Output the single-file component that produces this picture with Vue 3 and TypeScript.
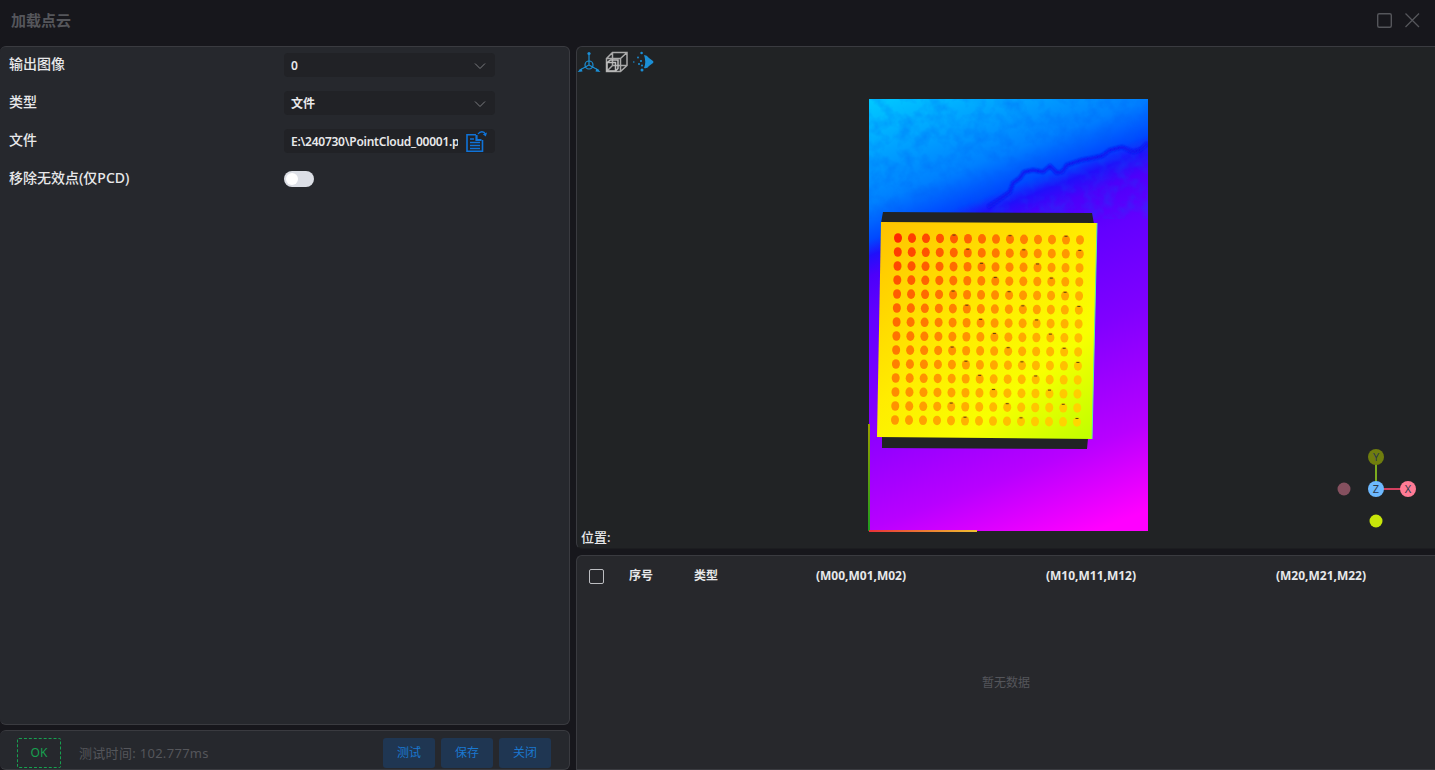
<script setup lang="ts">
interface Dot {
  key: string;
  x: number;
  y: number;
  fill: string;
  speck: boolean;
}

const columns = ['(M00,M01,M02)', '(M10,M11,M12)', '(M20,M21,M22)'];

// Hole grid on the plate, slightly skewed like the captured part.
const dots: Dot[] = [];
for (let row = 0; row < 14; row++) {
  for (let col = 0; col < 14; col++) {
    const t = (col + row) / 26;
    const g = Math.round(40 + 175 * Math.pow(t, 0.65));
    dots.push({
      key: `${row}-${col}`,
      x: 898 + col * 14 - (row * 3) / 13,
      y: 238 + col * 0.15 + row * 14,
      fill: `rgb(255, ${g}, 0)`,
      speck: col > 3 && (row * 7 + col * 5) % 4 === 0,
    });
  }
}

const contour =
  'M1148 143 L1140 150 L1133 152 L1122 147 L1110 150 L1102 156 L1093 158 L1082 160 L1067 165 L1062 172 L1057 173 L1050 166 L1043 172 L1033 170 L1024 172 L1020 178 L1013 183 L1010 192 L1003 197 L997 201 L988 207';
</script>

<template>
  <div class="page">
    <header class="title-bar">
      <span class="title">加载点云</span>
      <div class="win-actions">
        <svg width="16" height="16" viewBox="0 0 16 16" fill="none" stroke="#55565b" stroke-width="1.4">
          <rect x="1.7" y="1.7" width="13.6" height="13.6" rx="1.5" />
        </svg>
        <svg width="16" height="16" viewBox="0 0 16 16" fill="none" stroke="#55565b" stroke-width="1.3">
          <path d="M1.5 1.5L15 15M15 1.5L1.5 15" />
        </svg>
      </div>
    </header>

    <main class="content">
      <section class="left">
        <div class="panel form">
          <div class="row">
            <label>输出图像</label>
            <div class="field">
              <span>0</span>
              <svg class="chevron" viewBox="0 0 12 12" fill="none" stroke="#7b7c80" stroke-width="1">
                <path d="M1 3.5L6 8.5L11 3.5" />
              </svg>
            </div>
          </div>
          <div class="row">
            <label>类型</label>
            <div class="field">
              <span>文件</span>
              <svg class="chevron" viewBox="0 0 12 12" fill="none" stroke="#7b7c80" stroke-width="1">
                <path d="M1 3.5L6 8.5L11 3.5" />
              </svg>
            </div>
          </div>
          <div class="row">
            <label>文件</label>
            <div class="field file">
              <span class="path">E:\240730\PointCloud_00001.pcd</span>
              <svg class="file-icon" viewBox="0 0 22 22" fill="none" stroke="#1073d8">
                <path stroke-width="1.6" d="M11 4.8H2V21.2H17.5V10" />
                <path stroke-width="1.7" d="M5 9H9M5 12.5H15M5 15.5H15M5 18.5H15" />
                <path stroke-width="2.2" d="M11.5 5V10H16.5" />
                <path stroke-width="1.3" d="M13 4C15 1 19 1 20.5 4" />
                <path d="M22 2.5L20.8 6.5L17.8 4.2Z" fill="#1073d8" stroke="none" />
              </svg>
            </div>
          </div>
          <div class="row">
            <label>移除无效点(仅PCD)</label>
            <div class="switch"><i></i></div>
          </div>
        </div>

        <footer class="panel status">
          <span class="ok">OK</span>
          <span class="time">测试时间: 102.777ms</span>
          <div class="buttons">
            <button type="button">测试</button>
            <button type="button">保存</button>
            <button type="button">关闭</button>
          </div>
        </footer>
      </section>

      <section class="right">
        <div class="viewer">
          <div class="tools">
            <svg class="tool" viewBox="0 0 24 22" fill="none" stroke="#1b8fd6" stroke-width="1.2">
              <path d="M12 2V14L2 19.5M12 14L22 19.5" />
              <circle cx="12" cy="14" r="4" />
              <circle cx="12" cy="2.5" r="1.6" fill="#1b8fd6" stroke="none" />
              <path d="M0.5 21L4.5 17.2L5.5 20.5ZM23.5 21L19.5 17.2L18.5 20.5Z" fill="#1b8fd6" stroke="none" />
            </svg>
            <svg class="tool" viewBox="0 0 24 22" fill="none" stroke="#a9a9a9" stroke-width="1.5">
              <path d="M1.5 7.5L7.5 1.5H22V14.5L15.5 20.5H1.5ZM7.5 1.5V14.5H22M7.5 14.5L1.5 20.5M1.5 7.5H15.5V20.5M15.5 7.5L22 1.5" />
              <path d="M2 11.5L5.5 9H13V17.5L10.5 20H2ZM2 11.5H10.5V20" stroke="#bdbdbd" />
            </svg>
            <svg class="tool" viewBox="0 0 24 22" fill="#1b8fd6">
              <path d="M11 4Q14 4 16 7L20 10Q21 11 20 12L16 15Q14 18 11 17Q13.5 11 11 4Z" />
              <circle cx="8.6" cy="2" r="1.3" />
              <circle cx="5" cy="6.5" r="0.9" />
              <circle cx="8" cy="10" r="1.1" />
              <circle cx="0.8" cy="11" r="0.8" />
              <circle cx="6" cy="13" r="1" />
              <circle cx="9" cy="14.5" r="1" />
              <circle cx="9" cy="19" r="1.5" />
            </svg>
          </div>

          <svg class="cloud" viewBox="0 0 1435 770" width="1435" height="770">
            <defs>
              <linearGradient id="depth" gradientUnits="userSpaceOnUse" x1="900" y1="90" x2="1070" y2="540">
                <stop offset="0" stop-color="#00c8ff" />
                <stop offset="0.1" stop-color="#00a4ff" />
                <stop offset="0.2" stop-color="#0080ff" />
                <stop offset="0.27" stop-color="#0048ff" />
                <stop offset="0.3" stop-color="#2010fa" />
                <stop offset="0.34" stop-color="#4c00fa" />
                <stop offset="0.42" stop-color="#6200ff" />
                <stop offset="0.6" stop-color="#8000ff" />
                <stop offset="0.83" stop-color="#b800ff" />
                <stop offset="1" stop-color="#ff00ff" />
              </linearGradient>
              <linearGradient id="plate" gradientUnits="userSpaceOnUse" x1="890" y1="215" x2="1085" y2="445">
                <stop offset="0" stop-color="#ffc200" />
                <stop offset="0.45" stop-color="#ffec00" />
                <stop offset="0.72" stop-color="#f8ff00" />
                <stop offset="1" stop-color="#beff00" />
              </linearGradient>
              <linearGradient id="axis-y" x1="0" y1="0" x2="0" y2="1">
                <stop offset="0" stop-color="#9aa000" />
                <stop offset="1" stop-color="#1f9a20" />
              </linearGradient>
              <linearGradient id="axis-x" x1="0" y1="0" x2="1" y2="0">
                <stop offset="0" stop-color="#e8303a" />
                <stop offset="1" stop-color="#f0c030" />
              </linearGradient>
              <filter id="mottle" x="0" y="0" width="100%" height="100%">
                <feTurbulence type="fractalNoise" baseFrequency="0.07" numOctaves="3" seed="7" />
                <feColorMatrix values="0 0 0 0 0  0 0 0 0 0.1  0 0 0 0 0.9  1.6 0 0 0 -0.62" />
              </filter>
              <filter id="soft"><feGaussianBlur stdDeviation="1.1" /></filter>
              <clipPath id="cloud-clip"><rect x="869" y="99" width="279" height="432" /></clipPath>
            </defs>

            <g clip-path="url(#cloud-clip)">
              <rect x="869" y="99" width="279" height="432" fill="url(#depth)" />
              <rect x="869" y="99" width="279" height="120" filter="url(#mottle)" opacity="0.4" />
              <path :d="contour" fill="none" stroke="#0a14f0" stroke-width="3.4" filter="url(#soft)" />
            </g>

            <path d="M883 212L1092 213L1094 224L881 223Z" fill="#212325" />
            <path d="M882 436L1088 438L1087 449L882 448Z" fill="#212325" />
            <path d="M881 222L1097 223L1092 439L877 437Z" fill="url(#plate)" />
            <path d="M1097 223L1092 439" stroke="#60f0a0" stroke-width="1" fill="none" />

            <g v-for="dot in dots" :key="dot.key">
              <ellipse :cx="dot.x" :cy="dot.y" rx="4" ry="4.8" :fill="dot.fill" />
              <rect v-if="dot.speck" :x="dot.x - 1.5" :y="dot.y - 4" width="3" height="1" fill="#5a4a10" />
            </g>

            <rect x="868" y="424" width="2" height="107" fill="url(#axis-y)" />
            <rect x="869" y="530" width="108" height="2" fill="url(#axis-x)" />

            <line x1="1376" y1="464" x2="1376" y2="482" stroke="#7cab1e" stroke-width="2" />
            <line x1="1383" y1="489" x2="1401" y2="489" stroke="#d2405f" stroke-width="2" />
            <circle cx="1376" cy="457" r="8" fill="#6f7d0e" />
            <circle cx="1344" cy="489" r="6.5" fill="#85505f" />
            <circle cx="1376" cy="521" r="6.5" fill="#c8e60a" />
            <circle cx="1408" cy="489" r="8" fill="#ff7b95" />
            <circle cx="1376" cy="489" r="8" fill="#6db9ff" />
            <text x="1376" y="461" class="axis-label">Y</text>
            <text x="1408" y="493" class="axis-label">X</text>
            <text x="1376" y="493" class="axis-label">Z</text>
          </svg>

          <span class="position">位置:</span>
        </div>

        <div class="table-panel">
          <div class="thead">
            <span class="check"></span>
            <span class="th-left">序号</span>
            <span class="th-left">类型</span>
            <span v-for="name in columns" :key="name" class="th-mid">{{ name }}</span>
          </div>
          <div class="empty">暂无数据</div>
        </div>
      </section>
    </main>
  </div>
</template>

<style>
  html,
  body {
    margin: 0;
    background: #17171c;
    overflow: hidden;
  }
</style>

<style scoped>
  .page {
    display: flex;
    flex-direction: column;
    width: 1435px;
    height: 770px;
    overflow: hidden;
    background: #17171c;
    color: #e8e8ea;
    font-family: 'Noto Sans', 'Noto Sans CJK SC', sans-serif;
    font-size: 13px;
    line-height: 18px;
  }

  .title-bar {
    display: flex;
    align-items: center;
    justify-content: space-between;
    flex: 0 0 46px;
    padding: 0 15px 6px 11px;
    box-sizing: border-box;
  }

  .title {
    font-size: 15px;
    font-weight: 700;
    color: #55565b;
  }

  .win-actions {
    display: flex;
    gap: 12px;
  }

  .content {
    flex: 1;
    display: grid;
    grid-template-columns: 570px 859px;
    column-gap: 6px;
    min-height: 0;
  }

  .left {
    display: flex;
    flex-direction: column;
    gap: 5px;
    min-height: 0;
  }

  .panel {
    box-sizing: border-box;
    border: 1px solid #3a3b40;
    border-left: none;
    border-radius: 6px;
    background: #26282d;
  }

  .form {
    flex: 1;
    padding: 0 9px;
  }

  .row {
    display: flex;
    align-items: center;
    height: 38px;
  }

  .row:first-child {
    margin-top: -1px;
  }

  .row label {
    flex: 0 0 275px;
    margin-top: -2px;
    font-size: 14px;
    font-weight: 500;
  }

  .field {
    display: flex;
    align-items: center;
    justify-content: space-between;
    box-sizing: border-box;
    width: 211px;
    height: 24px;
    padding: 2px 8px 0 7px;
    border-radius: 4px;
    background: #212226;
    font-size: 12px;
    font-weight: 600;
  }

  .chevron {
    width: 12px;
    height: 12px;
    margin-right: 1px;
  }

  .path {
    width: 167px;
    overflow: hidden;
    white-space: nowrap;
    letter-spacing: -0.25px;
  }

  .file-icon {
    width: 22px;
    height: 22px;
    margin-top: -2px;
    flex-shrink: 0;
  }

  .switch {
    display: flex;
    align-items: center;
    width: 30px;
    height: 16px;
    padding-left: 2px;
    box-sizing: border-box;
    border-radius: 8px;
    background: #dcdfe6;
  }

  .switch i {
    width: 12px;
    height: 12px;
    border-radius: 50%;
    background: #fff;
  }

  .status {
    display: flex;
    align-items: center;
    flex: 0 0 40px;
    padding: 6px 18px 0 17px;
  }

  .ok {
    display: flex;
    align-items: center;
    justify-content: center;
    box-sizing: border-box;
    width: 44px;
    height: 30px;
    border: 1px dashed #17a050;
    border-radius: 2px;
    color: #17a050;
    font-size: 12px;
  }

  .time {
    margin-left: 18px;
    color: #55565b;
    font-size: 13px;
    letter-spacing: 0.3px;
  }

  .buttons {
    display: flex;
    gap: 6px;
    margin-left: auto;
  }

  .buttons button {
    width: 52px;
    height: 30px;
    padding: 0;
    border: none;
    border-radius: 3px;
    background: #1f3652;
    color: #1a78d0;
    font: inherit;
    font-size: 12px;
  }

  .right {
    display: flex;
    flex-direction: column;
    gap: 6px;
    min-height: 0;
  }

  .viewer {
    position: relative;
    flex: 0 0 503px;
    box-sizing: border-box;
    overflow: hidden;
    border: 1px solid #3a3b40;
    border-right: none;
    border-bottom-color: #1c1d20;
    border-radius: 6px 0 0 6px;
    background: #212325;
  }

  .tools {
    position: absolute;
    top: 4px;
    left: 0;
    display: flex;
    gap: 4px;
    z-index: 1;
  }

  .tool {
    width: 24px;
    height: 22px;
  }

  /* viewBox is the whole window so scene points read as screen coordinates */
  .cloud {
    position: absolute;
    top: -47px;
    left: -577px;
  }

  .axis-label {
    font-size: 11px;
    fill: #2d3a4a;
    text-anchor: middle;
    font-family: 'Noto Sans', sans-serif;
  }

  .position {
    position: absolute;
    left: 4px;
    bottom: 2px;
    font-size: 13px;
    font-weight: 500;
  }

  .table-panel {
    display: flex;
    flex-direction: column;
    flex: 1;
    box-sizing: border-box;
    border: 1px solid #3a3b40;
    border-right: none;
    border-radius: 6px 0 0 0;
    background: #27282c;
  }

  .thead {
    display: grid;
    grid-template-columns: 39px 65px 65px 230px 230px 230px;
    align-items: center;
    height: 40px;
    font-size: 12px;
    font-weight: 700;
  }

  .check {
    box-sizing: border-box;
    width: 15px;
    height: 15px;
    margin-left: 12px;
    border: 1px solid #bdbec2;
    border-radius: 2px;
  }

  .th-left {
    padding-left: 13px;
  }

  .th-mid {
    text-align: center;
  }

  .empty {
    flex: 1;
    display: flex;
    align-items: center;
    justify-content: center;
    color: #55565b;
    font-size: 12px;
  }
</style>
